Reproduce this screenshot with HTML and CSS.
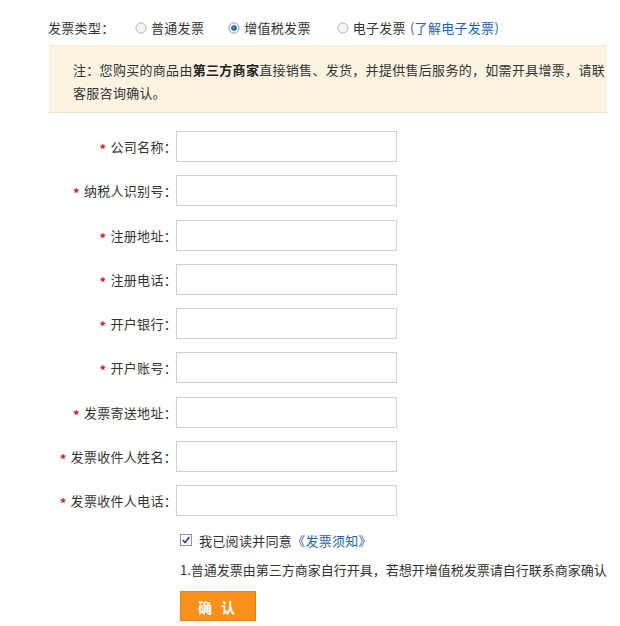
FILE: index.html
```html
<!DOCTYPE html>
<html lang="zh-CN">
<head>
<meta charset="utf-8">
<link rel="stylesheet" href="styles.css">
</head>
<body>
<div class="page">
  <div class="type-row">
    <span class="type-label">发票类型：</span>
    <label class="radio"><svg class="rd" viewBox="0 0 13 13"><circle cx="6.5" cy="6.5" r="5.5" fill="#f4f4f4" stroke="#b4b4b4"/></svg>普通发票</label>
    <label class="radio"><svg class="rd" viewBox="0 0 13 13"><circle cx="6.5" cy="6.5" r="5.5" fill="#eef2f6" stroke="#8a98a8"/><circle cx="6.5" cy="6.5" r="3" fill="#1f5e8e"/><circle cx="6" cy="6" r="1.2" fill="#6fa8d6"/></svg>增值税发票</label>
    <label class="radio"><svg class="rd" viewBox="0 0 13 13"><circle cx="6.5" cy="6.5" r="5.5" fill="#f4f4f4" stroke="#b4b4b4"/></svg>电子发票 <a class="link">(了解电子发票)</a></label>
  </div>
  <div class="notice">
    <div class="notice-line">注：您购买的商品由<b>第三方商家</b>直接销售、发货，并提供售后服务的，如需开具增票，请联</div>
    <div class="notice-line">客服咨询确认。</div>
  </div>
  <div class="form">
    <div class="row"><span class="lbl"><i class="star">*</i>公司名称：</span><span class="inp"></span></div>
    <div class="row"><span class="lbl"><i class="star">*</i>纳税人识别号：</span><span class="inp"></span></div>
    <div class="row"><span class="lbl"><i class="star">*</i>注册地址：</span><span class="inp"></span></div>
    <div class="row"><span class="lbl"><i class="star">*</i>注册电话：</span><span class="inp"></span></div>
    <div class="row"><span class="lbl"><i class="star">*</i>开户银行：</span><span class="inp"></span></div>
    <div class="row"><span class="lbl"><i class="star">*</i>开户账号：</span><span class="inp"></span></div>
    <div class="row"><span class="lbl"><i class="star">*</i>发票寄送地址：</span><span class="inp"></span></div>
    <div class="row"><span class="lbl"><i class="star">*</i>发票收件人姓名：</span><span class="inp"></span></div>
    <div class="row"><span class="lbl"><i class="star">*</i>发票收件人电话：</span><span class="inp"></span></div>
  </div>
  <div class="bottom">
    <div class="agree"><svg class="cb" viewBox="0 0 13 13"><rect x="0.5" y="0.5" width="12" height="12" fill="#fbfbfb" stroke="#8e8f8f"/><path d="M3 6.5 L5.4 9.2 L10 3.4" fill="none" stroke="#2b4d8a" stroke-width="1.8"/></svg>我已阅读并同意<a class="link">《发票须知》</a></div>
    <div class="tip">1.普通发票由第三方商家自行开具，若想开增值税发票请自行联系商家确认</div>
    <div class="btn">确 认</div>
  </div>
</div>
</body>
</html>
```
FILE: styles.css
```css
* { box-sizing: border-box; }
html, body { margin: 0; padding: 0; background: #fff; }
body {
  font-family: "Noto Sans CJK SC", "Noto Sans", sans-serif;
  font-size: 13px;
  letter-spacing: 0.3px;
  color: #333;
  width: 620px;
  height: 626px;
  overflow: hidden;
}
.page { padding-left: 48px; width: 607px; overflow: hidden; }
.type-row {
  display: flex;
  align-items: center;
  height: 20px;
  margin-top: 18px;
  line-height: 20px;
  font-size: 13px;
}
.type-label { width: 87px; }
.radio { display: flex; align-items: center; margin-right: 26px; }
.radio:first-of-type { margin-right: 24px; }
.rd { width: 12px; height: 12px; margin-right: 4px; }
.link { color: #1d64a8; text-decoration: none; margin-left: 4px; }
.notice {
  margin-top: 7px;
  margin-left: 1px;
  width: 558px;
  height: 68px;
  background: #fcf3e2;
  border-top: 1px solid #f6e8cc;
  border-bottom: 1px solid #f1e3c6;
  padding: 12px 0 0 24px;
  line-height: 23px;
  overflow: hidden;
}
.notice-line { white-space: nowrap; }
.notice b { font-weight: bold; color: #222; }
.form {
  display: flex;
  flex-direction: column;
  gap: 13.25px;
  margin-top: 18px;
}
.row { display: flex; align-items: center; height: 31px; }
.lbl {
  width: 129px;
  margin-right: -1px;
  text-align: right;
  white-space: nowrap;
}
.star {
  display: inline-block;
  color: #c0272d;
  font-style: normal;
  margin-right: 4px;
  font-size: 13px;
  font-weight: bold;
  transform: translateY(2px);
}
.inp {
  width: 221px;
  height: 31px;
  border: 1px solid #cfcfcf;
  background: #fff;
}
.bottom { padding-left: 132px; }
.agree {
  display: flex;
  align-items: center;
  margin-top: 14px;
  height: 20px;
}
.cb { width: 12px; height: 12px; margin-right: 7px; }
.agree .link { margin-left: 0; }
.tip { margin-top: 10px; height: 20px; line-height: 20px; white-space: nowrap; letter-spacing: 0; }
.btn {
  margin-top: 11px;
  width: 76px;
  height: 30px;
  line-height: 30px;
  text-align: center;
  background: #f7911c;
  border: 1px solid #e58213;
  color: #fff;
  font-weight: bold;
  font-size: 14px;
  letter-spacing: 3px;
}
```
